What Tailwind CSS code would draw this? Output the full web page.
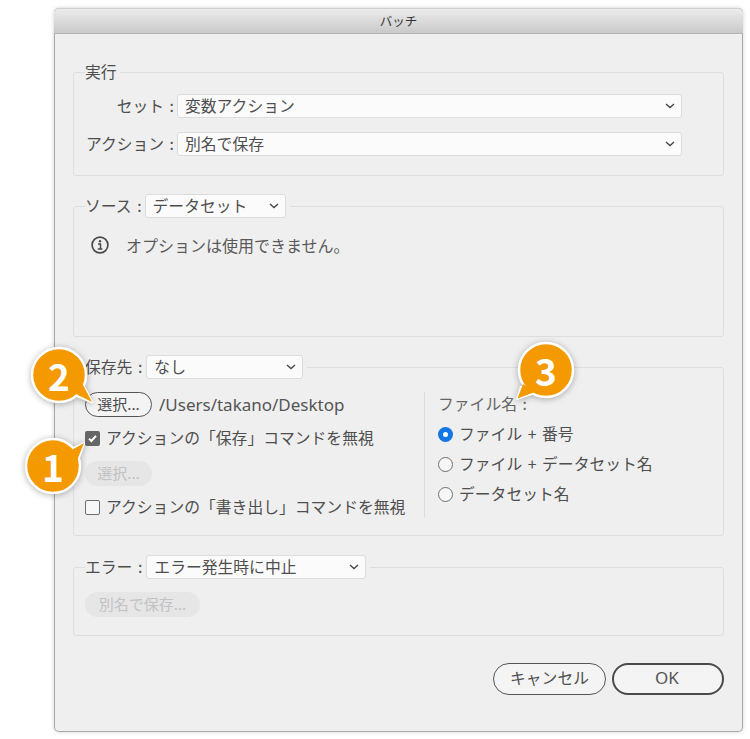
<!DOCTYPE html>
<html lang="ja">
<head>
<meta charset="utf-8">
<script src="https://cdn.jsdelivr.net/npm/@tailwindcss/browser@4"></script>
</head>
<body class="bg-white w-[750px] h-[739px] overflow-hidden font-['Noto_Sans_CJK_JP','Noto_Sans',sans-serif] text-[15.8px] text-[#4e4e4e] [word-spacing:2px]">
<div class="relative ml-[54px] mt-[8px] w-[689px] h-[724px] rounded-[5px] border-x border-b border-[#a9a9a9] bg-[#efefef] shadow-[0_0_4px_rgba(0,0,0,0.18)]">
  <div class="h-[26px] -mx-px rounded-t-[5px] bg-gradient-to-b from-[#ececec] to-[#c9c9c9] border-b border-[#b5b5b5] border-t border-t-[#d0d0d0] flex items-center justify-center text-[12.5px] text-[#333]">バッチ</div>

  <div class="pl-[18px] pr-[18px]">
    <!-- 実行 -->
    <section class="mt-[38px] h-[104px] rounded-[3px] border border-[#dedede] px-[11px]">
      <div class="-mt-[14px] h-[25px] w-fit flex items-center bg-[#efefef] pr-[3px] leading-none"><span>実行</span></div>
      <div class="mt-[10px] flex items-center">
        <span class="w-[92px] text-right pr-[3px] whitespace-nowrap">セット :</span>
        <div class="w-[505px] h-[24px] rounded-[3px] border border-[#dcdcdc] bg-[#fbfbfb] flex items-center justify-between pl-[7px] pr-[6px]">
          <span>変数アクション</span>
          <svg class="w-[10px] h-[6px]" viewBox="0 0 10 6" fill="none" stroke="#444" stroke-width="1.3"><path d="M1 1l4 3.6L9 1"/></svg>
        </div>
      </div>
      <div class="mt-[14px] flex items-center">
        <span class="w-[92px] text-right pr-[3px] whitespace-nowrap">アクション :</span>
        <div class="w-[505px] h-[24px] rounded-[3px] border border-[#dcdcdc] bg-[#fbfbfb] flex items-center justify-between pl-[7px] pr-[6px]">
          <span>別名で保存</span>
          <svg class="w-[10px] h-[6px]" viewBox="0 0 10 6" fill="none" stroke="#444" stroke-width="1.3"><path d="M1 1l4 3.6L9 1"/></svg>
        </div>
      </div>
    </section>

    <!-- ソース -->
    <section class="mt-[30px] h-[131px] rounded-[3px] border border-[#dedede] px-[11px]">
      <div class="-mt-[14px] h-[25px] w-fit flex items-center gap-[3px] bg-[#efefef] pr-[4px]">
        <span class="whitespace-nowrap">ソース :</span>
        <div class="w-[141px] h-[24px] rounded-[3px] border border-[#dcdcdc] bg-[#fbfbfb] flex items-center justify-between pl-[7px] pr-[6px]">
          <span>データセット</span>
          <svg class="w-[10px] h-[6px]" viewBox="0 0 10 6" fill="none" stroke="#444" stroke-width="1.3"><path d="M1 1l4 3.6L9 1"/></svg>
        </div>
      </div>
      <div class="mt-[15px] ml-[6px] flex items-center gap-[17px] text-[16px] text-[#5a5a5a]">
        <svg class="w-[18px] h-[18px]" viewBox="0 0 18 18" fill="none"><circle cx="9" cy="9" r="7.9" stroke="#4a4a4a" stroke-width="1.7"/><circle cx="9" cy="5.2" r="1.2" fill="#4a4a4a"/><path d="M7 7.9h2.5v4.8M6.8 13h4.6" stroke="#4a4a4a" stroke-width="1.5"/></svg>
        <span>オプションは使用できません。</span>
      </div>
    </section>

    <!-- 保存先 -->
    <section class="mt-[30px] h-[169px] rounded-[3px] border border-[#dedede] px-[11px]">
      <div class="-mt-[14px] h-[25px] w-fit flex items-center gap-[4px] bg-[#efefef] pr-[4px]">
        <span class="whitespace-nowrap">保存先 :</span>
        <div class="w-[157px] h-[24px] rounded-[3px] border border-[#dcdcdc] bg-[#fbfbfb] flex items-center justify-between pl-[7px] pr-[6px]">
          <span>なし</span>
          <svg class="w-[10px] h-[6px]" viewBox="0 0 10 6" fill="none" stroke="#444" stroke-width="1.3"><path d="M1 1l4 3.6L9 1"/></svg>
        </div>
      </div>
      <div class="flex mt-[13px]">
        <div class="w-[340px] h-[126px] border-r border-[#dedede]">
          <div class="flex items-center gap-[7px]">
            <div class="w-[67px] h-[25px] rounded-full border border-[#555] bg-[#f4f4f4] flex items-center justify-center text-[15px]">選択...</div>
            <span class="text-[#555] text-[17px] leading-none font-['Noto_Sans']">/Users/takano/Desktop</span>
          </div>
          <div class="mt-[10px] flex items-center gap-[6px] h-[22px]">
            <div class="w-[15px] h-[15px] rounded-[2px] bg-[#666] flex items-center justify-center">
              <svg class="w-[11px] h-[11px]" viewBox="0 0 11 11" fill="none" stroke="#fff" stroke-width="2"><path d="M2 5.6l2.4 2.4L9 2.8"/></svg>
            </div>
            <span class="whitespace-nowrap">アクションの「保存」コマンドを無視</span>
          </div>
          <div class="mt-[12px] w-[67px] h-[25px] rounded-full bg-[#e6e6e6] flex items-center justify-center text-[15px] text-[#c2c2c2]">選択...</div>
          <div class="mt-[10px] flex items-center gap-[6px] h-[22px]">
            <div class="w-[15px] h-[15px] rounded-[2px] border border-[#6e6e6e] bg-[#f7f7f7]"></div>
            <span class="whitespace-nowrap">アクションの「書き出し」コマンドを無視</span>
          </div>
        </div>
        <div class="pl-[13px] pt-[1px]">
          <div class="h-[22px] flex items-center text-[#666]">ファイル名 :</div>
          <div class="mt-[8px] h-[22px] flex items-center gap-[6px]">
            <div class="w-[15px] h-[15px] rounded-full bg-[#1476e4] flex items-center justify-center"><div class="w-[5px] h-[5px] rounded-full bg-white"></div></div>
            <span>ファイル + 番号</span>
          </div>
          <div class="mt-[8px] h-[22px] flex items-center gap-[6px]">
            <div class="w-[15px] h-[15px] rounded-full border border-[#6e6e6e] bg-[#f7f7f7]"></div>
            <span>ファイル + データセット名</span>
          </div>
          <div class="mt-[8px] h-[22px] flex items-center gap-[6px]">
            <div class="w-[15px] h-[15px] rounded-full border border-[#6e6e6e] bg-[#f7f7f7]"></div>
            <span>データセット名</span>
          </div>
        </div>
      </div>
    </section>

    <!-- エラー -->
    <section class="mt-[31px] h-[69px] rounded-[3px] border border-[#dedede] px-[11px]">
      <div class="-mt-[14px] h-[25px] w-fit flex items-center gap-[4px] bg-[#efefef] pr-[4px]">
        <span class="whitespace-nowrap">エラー :</span>
        <div class="w-[220px] h-[24px] rounded-[3px] border border-[#dcdcdc] bg-[#fbfbfb] flex items-center justify-between pl-[7px] pr-[6px]">
          <span>エラー発生時に中止</span>
          <svg class="w-[10px] h-[6px]" viewBox="0 0 10 6" fill="none" stroke="#444" stroke-width="1.3"><path d="M1 1l4 3.6L9 1"/></svg>
        </div>
      </div>
      <div class="mt-[13px] w-[115px] h-[25px] rounded-full bg-[#e6e6e6] flex items-center justify-center text-[15px] text-[#c2c2c2]">別名で保存...</div>
    </section>

    <div class="mt-[27px] flex justify-end gap-[6px]">
      <div class="w-[113px] h-[32px] rounded-full border border-[#555] bg-[#f4f4f4] flex items-center justify-center pb-[2px]">キャンセル</div>
      <div class="w-[112px] h-[32px] rounded-full border-[2px] border-[#4a4a4a] bg-[#f4f4f4] flex items-center justify-center font-['Noto_Sans'] text-[17px] text-[#555] pb-[2px] pr-[2px]">OK</div>
    </div>
  </div>

  <!-- callouts -->
  <svg class="absolute left-[-28px] top-[333px] w-[72px] h-[72px] overflow-visible" viewBox="0 0 72 72" style="filter:drop-shadow(0 1px 3px rgba(0,0,0,.3))"><path d="M65 61 L48 54 L56 44 Z" fill="#f49a00" stroke="#fff" stroke-width="2.5" stroke-linejoin="round"/><circle cx="32" cy="34" r="27" fill="#f49a00" stroke="#fff" stroke-width="2.5"/><path d="M65 61 L47 52 L55 42 Z" fill="#f49a00"/></svg>
  <span class="absolute left-[-28px] top-[333px] w-[64px] h-[68px] flex items-center justify-center text-white text-[37px] font-bold leading-none">2</span>

  <svg class="absolute left-[-35px] top-[424px] w-[72px] h-[72px] overflow-visible" viewBox="0 0 72 72" style="filter:drop-shadow(0 1px 3px rgba(0,0,0,.3))"><path d="M64 11 L50 18 L58 28 Z" fill="#f49a00" stroke="#fff" stroke-width="2.5" stroke-linejoin="round"/><circle cx="33" cy="34" r="27" fill="#f49a00" stroke="#fff" stroke-width="2.5"/><path d="M64 11 L48 20 L56 31 Z" fill="#f49a00"/></svg>
  <span class="absolute left-[-35px] top-[424px] w-[66px] h-[68px] flex items-center justify-center text-white text-[37px] font-bold leading-none">1</span>

  <svg class="absolute left-[461px] top-[334px] w-[72px] h-[72px] overflow-visible" viewBox="0 0 72 72" style="filter:drop-shadow(0 1px 3px rgba(0,0,0,.3))"><path d="M1.5 56.5 L5 45 L16.5 51.5 Z" fill="#f49a00" stroke="#fff" stroke-width="2.5" stroke-linejoin="round"/><circle cx="30" cy="28" r="27" fill="#f49a00" stroke="#fff" stroke-width="2.5"/><path d="M1.5 56.5 L7 42 L19 50 Z" fill="#f49a00"/></svg>
  <span class="absolute left-[461px] top-[334px] w-[60px] h-[56px] flex items-center justify-center text-white text-[37px] font-bold leading-none">3</span>
</div>
</body>
</html>
